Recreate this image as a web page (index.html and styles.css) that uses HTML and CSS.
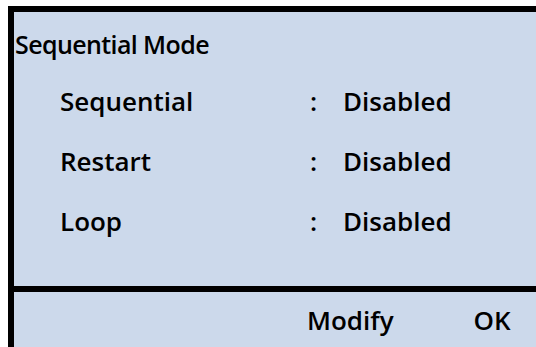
FILE: index.html
```html
<!DOCTYPE html>
<html>
<head>
<meta charset="utf-8">
<link rel="stylesheet" href="styles.css">
</head>
<body>
<div class="screen">
  <div class="panel">
    <div class="main">
      <div class="title">Sequential Mode</div>
      <div class="rows">
        <div class="label">Sequential</div><div class="colon">:</div><div class="value">Disabled</div>
        <div class="label">Restart</div><div class="colon">:</div><div class="value">Disabled</div>
        <div class="label">Loop</div><div class="colon">:</div><div class="value">Disabled</div>
      </div>
    </div>
    <div class="footer">
      <span class="btn modify">Modify</span>
      <span class="btn ok">OK</span>
    </div>
  </div>
</div>
</body>
</html>
```
FILE: styles.css
```css
html, body {
  margin: 0;
  padding: 0;
  background: #ffffff;
}
.screen {
  width: 536px;
  height: 347px;
  padding: 6px 0 0 8px;
  box-sizing: border-box;
  font-family: "Open Sans", "Noto Sans", sans-serif;
  font-weight: 600;
  color: #000;
}
.panel {
  height: 341px;
  background: #ccd9eb;
  border-top: 6px solid #000;
  border-left: 6px solid #000;
  box-sizing: border-box;
  display: flex;
  flex-direction: column;
}
.main {
  height: 274px;
  border-bottom: 6px solid #000;
  box-sizing: content-box;
}
.title {
  font-size: 25px;
  letter-spacing: -0.6px;
  line-height: 34px;
  padding: 15px 0 0 1px;
}
.rows {
  display: grid;
  grid-template-columns: 250px 33px auto;
  grid-auto-rows: 60px;
  align-items: center;
  padding: 10px 0 0 46px;
  font-size: 26px;
}
.footer {
  flex: 1;
  display: flex;
  align-items: center;
  font-size: 26px;
}
.modify {
  margin-left: 293px;
}
.ok {
  margin-left: 80px;
}
```
